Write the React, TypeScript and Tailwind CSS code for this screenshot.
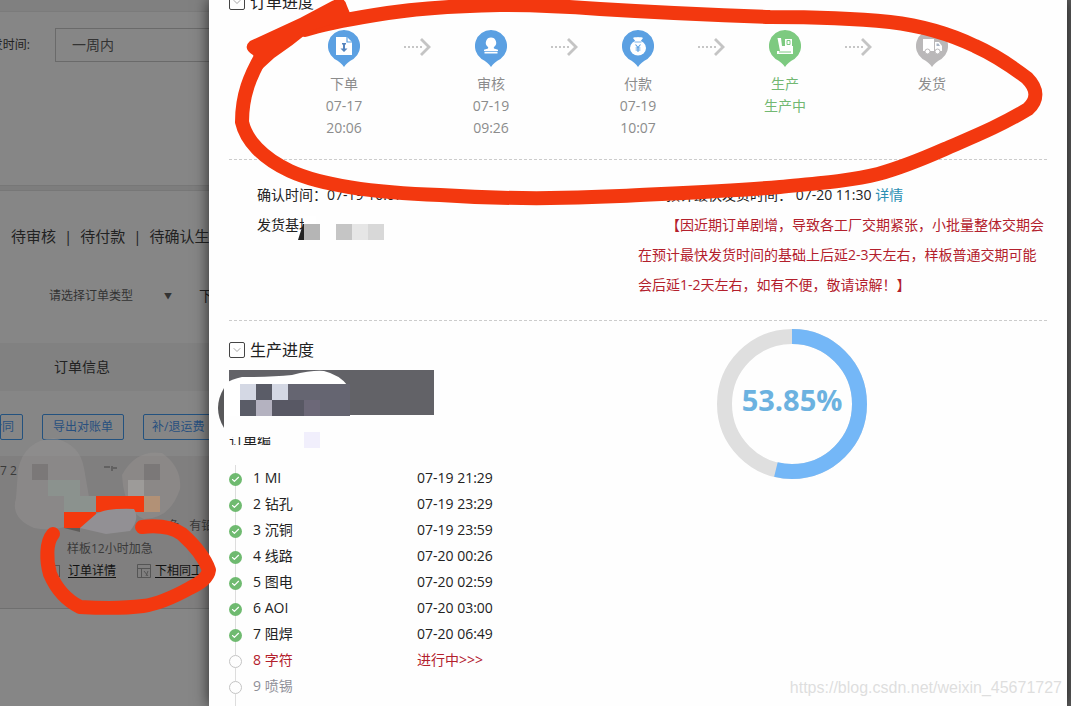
import type { ReactNode } from 'react';
import { Check, ChevronDown } from 'lucide-react';

type Step = {
  label: string;
  lines: string[];
  tone: 'done' | 'active' | 'idle';
  glyph: ReactNode;
};

const TONES = {
  done: { pin: 'text-[#5ba0e2]', text: 'text-[#8c8c8c]' },
  active: { pin: 'text-[#7dca80]', text: 'text-[#72b872]' },
  idle: { pin: 'text-[#bab8b9]', text: 'text-[#8c8c8c]' },
};

const steps: Step[] = [
  {
    label: '下单',
    lines: ['07-17', '20:06'],
    tone: 'done',
    glyph: (
      <>
        <path d="M8 7h11l5 5v13H8z" fill="#fff" />
        <path d="M19 7v5h5" fill="none" stroke="#5ba0e2" strokeWidth="1.2" />
        <path d="M14 13h4v1.500h-1v4h2.500L16 22l-3.500-3.500H15v-4h-1z" fill="#5584bd" />
      </>
    ),
  },
  {
    label: '审核',
    lines: ['07-19', '09:26'],
    tone: 'done',
    glyph: (
      <path
        d="M16 7.500a5.200 5.200 0 0 1 3.300 9.200c-.8.8-.7 1.800.4 2.100l3.300.9v1.300H9v-1.300l3.300-.9c1.100-.3 1.200-1.300.4-2.100A5.200 5.200 0 0 1 16 7.500zM9.500 21.800h13v1.600h-13z"
        fill="#fff"
      />
    ),
  },
  {
    label: '付款',
    lines: ['07-19', '10:07'],
    tone: 'done',
    glyph: (
      <>
        <path d="M11 8c1.500-1.500 3 0 5-1 2 1 3.500-.5 5 1l-2.600 3.500h-4.800z" fill="#fff" />
        <ellipse cx="16" cy="18" rx="8" ry="7.500" fill="#fff" />
        <path d="M13.500 14.500 16 17.500l2.500-3M16 17.500V22M13.600 18h4.800M13.600 20h4.800" fill="none" stroke="#5ba0e2" strokeWidth="1.100" />
        <path d="M12.500 12h7" stroke="#5ba0e2" strokeWidth="0.8" />
      </>
    ),
  },
  {
    label: '生产',
    lines: ['生产中'],
    tone: 'active',
    glyph: (
      <>
        <path d="M8.500 8h3.500l1 8h3V9h7v7h1v8H8v-3h3z" fill="#fff" />
        <path d="M18 10.500h3v4h-3zM10 22h12" fill="none" stroke="#7dca80" strokeWidth="1" />
      </>
    ),
  },
  {
    label: '发货',
    lines: [],
    tone: 'idle',
    glyph: (
      <>
        <path d="M7 9h11v12H7zM19 12h4l3 4v5h-7z" fill="#fff" />
        <path d="M20.500 13.500h2l1.500 2.500h-3.500z" fill="#a9b4c4" />
        <circle cx="11.500" cy="21.500" r="2.500" fill="#fff" stroke="#bab8b9" />
        <circle cx="21.500" cy="21.500" r="2.500" fill="#fff" stroke="#bab8b9" />
      </>
    ),
  },
];

const stages = [
  { name: '1 MI', time: '07-19 21:29', state: 'done' },
  { name: '2 钻孔', time: '07-19 23:29', state: 'done' },
  { name: '3 沉铜', time: '07-19 23:59', state: 'done' },
  { name: '4 线路', time: '07-20 00:26', state: 'done' },
  { name: '5 图电', time: '07-20 02:59', state: 'done' },
  { name: '6 AOI', time: '07-20 03:00', state: 'done' },
  { name: '7 阻焊', time: '07-20 06:49', state: 'done' },
  { name: '8 字符', time: '进行中>>>', state: 'current' },
  { name: '9 喷锡', time: '', state: 'todo' },
];

function StepPin({ step }: { step: Step }) {
  return (
    <svg viewBox="0 0 32 38" className={`w-8 h-[38px] ${TONES[step.tone].pin}`}>
      <path d="M16 0a16 16 0 0 1 9.500 28.900C21 31 18 34 16 37c-2-3-5-6-9.500-8.100A16 16 0 0 1 16 0z" fill="currentColor" />
      {step.glyph}
    </svg>
  );
}

function StepArrow() {
  return (
    <svg viewBox="0 0 29 20" className="w-[29px] h-5 mt-[7px]">
      <path d="M1 10h20" stroke="#c6c6c6" strokeWidth="2" strokeDasharray="2 2" />
      <path d="m18 2 8 8-8 8" fill="none" stroke="#c4c4c4" strokeWidth="2.800" />
    </svg>
  );
}

function SectionTitle({ children }: { children: ReactNode }) {
  return (
    <h2 className="flex items-center gap-[5px] h-6 text-base text-[#222]">
      <button type="button" aria-label="折叠" className="w-4 h-4 border border-[#444] rounded-xs flex items-center justify-center">
        <ChevronDown className="w-3 h-3 text-[#888]" strokeWidth={1.500} />
      </button>
      {children}
    </h2>
  );
}

function ProgressRing({ percent }: { percent: number }) {
  return (
    <div className="grid place-items-center w-[150px] h-[150px]">
      <svg viewBox="0 0 150 150" className="col-start-1 row-start-1 w-full h-full -rotate-90">
        <circle cx="75" cy="75" r="67.500" fill="none" stroke="#dfdfdf" strokeWidth="15" />
        <circle cx="75" cy="75" r="67.500" fill="none" stroke="#74b7f7" strokeWidth="15" pathLength="100" strokeDasharray={`${percent} 100`} />
      </svg>
      <span className="col-start-1 row-start-1 pb-2 text-[29px] leading-8 font-bold text-[#6cb2e0]">{percent}%</span>
    </div>
  );
}

function OrdersPage() {
  const toolButton = 'h-[26px] border border-[#23527f] rounded-xs text-xs text-[#28507f] whitespace-nowrap shrink-0';
  return (
    <aside className="w-[209px] shrink-0 overflow-hidden bg-[#868686] text-[#222] whitespace-nowrap">
      <div className="h-3 bg-[#808080] border-b border-[#7b7b7b]" />
      {/* date filter */}
      <div className="flex pt-4 pb-[123px]">
        <label htmlFor="range" className="w-[30px] flex justify-end text-xs leading-[34px]">发时间:</label>
        <select id="range" className="appearance-none ml-[25px] w-[220px] shrink-0 h-[34px] px-4 border border-[#6a6a6a] text-sm text-[#333]">
          <option>一周内</option>
        </select>
      </div>
      <div className="h-[6px] bg-[#7d7d7d] border-y border-[#777]" />

      {/* status tabs */}
      <nav className="flex gap-2 pl-[11px] pt-[33px] text-[15px] leading-6">
        <a href="#review">待审核</a>
        <span>|</span>
        <a href="#pay">待付款</a>
        <span>|</span>
        <a href="#confirm">待确认生产</a>
      </nav>
      <div className="flex items-center mt-9 h-6 text-xs">
        <select aria-label="订单类型" className="appearance-none ml-[49px] w-[115px] shrink-0 text-[#333]">
          <option>请选择订单类型</option>
        </select>
        <span className="text-[8px] text-[#333]">▼</span>
        <span className="ml-[27px] text-sm">下单</span>
      </div>

      {/* order table */}
      <div className="mt-[35px] h-12 bg-[#818181] pl-[54px] text-sm leading-[48px]">订单信息</div>
      <div className="flex gap-[19px] mt-[23px]">
        <button type="button" className={`${toolButton} w-[23px] flex justify-end items-center pr-2`}>合同</button>
        <button type="button" className={`${toolButton} w-[82px]`}>导出对账单</button>
        <button type="button" className={`${toolButton} w-[84px] pl-2 text-left`}>补/退运费</button>
      </div>
      <div className="mt-4 pt-[3px] pb-[26px] bg-[#807f7f] border-b border-[#6f6f6f] text-xs text-[#3a3a3a]">
        <div className="leading-6">7 2</div>
        <div className="mt-[31px] pl-[168px] leading-6">色&nbsp; &nbsp;有铅</div>
        <div className="pl-[67px] leading-[22px]">样板12小时加急</div>
        <div className="flex items-center leading-[22px] text-[#111]">
          <span className="ml-12 w-3 h-3 shrink-0 border border-[#555]" />
          <a href="#detail" className="ml-2 underline underline-offset-2">订单详情</a>
          <svg viewBox="0 0 14 14" className="ml-[21px] mr-1 w-[14px] h-[14px] shrink-0" fill="none" stroke="#555">
            <path d="M.5.500h13v13H.5zM.5 4.500h13M4.500 4.500v9M7 7l4 5M11 7l-2 5" />
          </svg>
          <a href="#again" className="underline underline-offset-2">下相同工艺</a>
        </div>
      </div>
    </aside>
  );
}

// hand-drawn marker and the pixelated private fields
function Markup() {
  return (
    <svg viewBox="0 0 1071 706" className="absolute left-0 top-0 w-[1071px] h-[706px] pointer-events-none" aria-hidden="true">
      {/* order row smudges */}
      <g>
        <path d="M18 470q6-30 36-32 26 6 30 30l8 46q-30 20-58 14-24-10-18-30z" fill="#949191" opacity=".5" />
        <path d="M122 475q14-26 40-22 20 14 18 36-10 30-36 30-20-8-22-44z" fill="#969290" opacity=".5" />
        <path d="M32 464h16v16H32zM144 464h16v16h-16z" fill="#7b7878" />
        <path d="M48 480h32v16H48zM64 496h32v16H64z" fill="#8b928e" />
        <path d="M128 480h16v16h-16z" fill="#9d9b99" />
        <path d="M144 496h16v16h-16z" fill="#b29176" />
        <path d="M104 467h6M112 466v5M113 468h4" stroke="#444" fill="none" />
        <path d="M64 512h32v16H64zM96 496h48v16H96z" fill="#f4390e" />
        <path d="M96 514q10-6 38-5 6 10-4 22l-24 3-26-6z" fill="#929094" />
        <path d="M64 528h16v4z" fill="#5e5c5a" />
      </g>
      {/* shipping base */}
      <path d="M304 216h12v24h-12z" fill="#fff" />
      <path d="m298 240 5-16h1v16z" fill="#222" />
      <path d="M304 224h16v16h-16z" fill="#b5b5b5" />
      <path d="M336 224h16v16h-16z" fill="#c5c5c5" />
      <path d="M352 224h16v16h-16z" fill="#e6e6e6" />
      <path d="M368 224h16v16h-16z" fill="#d8d8d8" />
      {/* production header */}
      <path d="M224 388q-12 20 0 40z" fill="#58585a" />
      <path d="M224 384q8-5 18-7 30 0 50-2 20-5 32-4 16 4 24 15v30H224z" fill="#fff" />
      <path d="M240 384h110v32H240z" fill="#656571" />
      <path d="M240 384h16v16h-16zM272 384h16v16h-16z" fill="#d4d8e4" />
      <path d="M256 384h16v16h-16zM240 400h16v16h-16z" fill="#5a5c67" />
      <path d="M256 400h16v16h-16z" fill="#b4b2c0" />
      <path d="M272 400h32v16h-32z" fill="#585864" />
      <path d="M304 400h16v16h-16z" fill="#6c6878" />
      <path d="M304 432h16v16h-16z" fill="#f1effc" />
      {/* marker rings */}
      <g fill="none" stroke="#f3380f" strokeWidth="14" strokeLinecap="round" strokeLinejoin="round">
        <path d="M142 527C160 525 172 527 182 534C192 543 204 556 209 570C208 578 200 583 190 588C172 598 158 604 143 606C120 609 98 608 80 607C66 600 56 588 50 574C46 560 46 542 53 534" />
        <path d="M262 55C250 76 242 95 242 122C246 140 262 158 290 171C325 187 380 193 440 195C500 199 560 199 620 196C680 193 730 191 780 187C820 183 850 181 878 174C900 168 920 160 945 149C975 136 1000 126 1028 109C1038 100 1038 89 1027 78C1010 65 995 55 975 46C950 34 925 26 890 22C850 18 810 17 770 17C710 15 650 12 600 9C560 6 530 5 500 5C450 6 410 9 375 15C350 19 325 23 305 30" />
      </g>
      <path d="M250 41 300 18 332 1Q345-5 347 6L352 18 310 31Q292 46 274 58L262 69 253 55Q242 48 250 41z" fill="#f3380f" />
    </svg>
  );
}

export default function App() {
  return (
    <div className={'relative flex h-screen overflow-hidden bg-[#606060] font-["Open_Sans","Noto_Sans_CJK_SC",sans-serif] text-sm'}>
      <OrdersPage />

      <main className="relative flex-1 mr-1 px-5 bg-[#fefefe] shadow-[0_0_14px_rgba(0,0,0,0.7)] text-[#222]">
        {/* order progress, scrolled partly out of view */}
        <section className="-mt-[10px] pb-5 border-b border-dashed border-[#ccc]">
          <SectionTitle>订单进度</SectionTitle>
          <ol className="flex justify-between items-start mt-4 px-[83px] h-[109px]">
            {steps.map((step, i) => (
              <li key={step.label} className="contents">
                {i > 0 && <StepArrow />}
                <div className={`w-16 flex flex-col items-center leading-[22px] ${TONES[step.tone].text}`}>
                  <StepPin step={step} />
                  <span className="mt-[5px]">{step.label}</span>
                  {step.lines.map(line => (
                    <span key={line}>{line}</span>
                  ))}
                </div>
              </li>
            ))}
          </ol>
        </section>

        <section className="grid grid-cols-2 py-5 border-b border-dashed border-[#ccc] leading-[30px]">
          <div className="pl-7">
            <p>确认时间：07-19 10:07</p>
            <p>发货基地</p>
          </div>
          <div>
            <p className="indent-7">
              预计最快发货时间： 07-20 11:30 <a href="#eta" className="text-[#2b8fb3]">详情</a>
            </p>
            <p className="indent-7 text-[#b3202c]">
              【因近期订单剧增，导致各工厂交期紧张，小批量整体交期会在预计最快发货时间的基础上后延2-3天左右，样板普通交期可能会后延1-2天左右，如有不便，敬请谅解！】
            </p>
          </div>
        </section>

        <section className="grid grid-cols-2">
          <div className="pt-[17px]">
            <SectionTitle>生产进度</SectionTitle>
            <div className="mt-2 w-[205px] h-[45px] bg-[#626267]" />
            <div className="mt-[22px] h-2 overflow-hidden leading-2">订单编</div>
            <ol className="mt-5">
              {stages.map(stage => (
                <li
                  key={stage.name}
                  className={`flex h-[26px] leading-[26px] ${
                    stage.state === 'current' ? 'text-[#b3202c]' : stage.state === 'todo' ? 'text-[#8f8f98]' : ''
                  }`}
                >
                  <span className="w-[13px] mr-[11px] flex flex-col items-center">
                    <span className="w-px h-2 bg-[#ddd]" />
                    {stage.state === 'done' ? (
                      <span className="w-[13px] h-[13px] rounded-full bg-[#6fba70] flex items-center justify-center">
                        <Check className="w-[9px] h-[9px] text-white" strokeWidth={3} />
                      </span>
                    ) : (
                      <span className="w-[13px] h-[13px] rounded-full border border-[#c4c4c4]" />
                    )}
                    <span className="w-px flex-1 bg-[#ddd]" />
                  </span>
                  <span className="w-[164px]">{stage.name}</span>
                  <span>{stage.time}</span>
                </li>
              ))}
              <li className="ml-[6px] w-px h-2 bg-[#ddd]" aria-hidden="true" />
            </ol>
          </div>
          <div className="pt-2 pl-[79px]">
            <ProgressRing percent={53.85} />
          </div>
        </section>
      </main>

      <Markup />
      <p className="absolute right-[9px] bottom-[6px] font-['Liberation_Sans',sans-serif] text-base text-[#dedede]">
        https://blog.csdn.net/weixin_45671727
      </p>
    </div>
  );
}
